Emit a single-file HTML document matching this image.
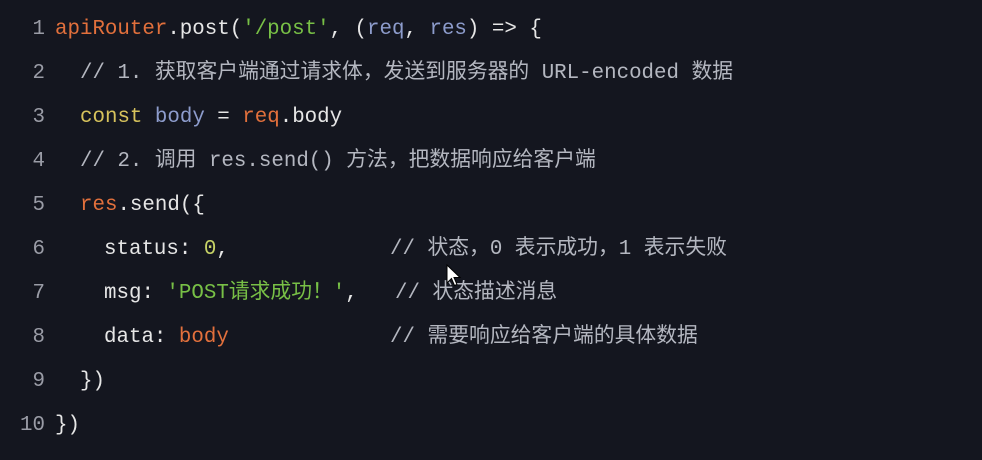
<!DOCTYPE html>
<html><head><meta charset="utf-8"><style>
body{margin:0;width:982px;height:460px;background:#14161f;overflow:hidden;position:relative;font-family:"Liberation Mono","Noto Sans CJK SC",monospace;font-size:20.8px;color:#e6e6e6}
.l{position:absolute;left:0;height:30px;line-height:30px;white-space:pre}
.n{position:absolute;width:45px;text-align:right;color:#9a9ca6}
.c{position:absolute;left:55px}
.o{color:#e2703c}.g{color:#78c046}.b{color:#8d9ccc}.y{color:#d6c25c}.k{color:#a8acb6}.z{color:#c6d266}
.cm{position:absolute;color:#b4b7c0}
</style></head><body>
<div class="l" style="top:15px"><span class="n">1</span><span class="c"><span class="o">apiRouter</span>.post(<span class="g">'/post'</span>, (<span class="b">req</span>, <span class="b">res</span>) =&gt; {</span></div>
<div class="l" style="top:59px"><span class="n">2</span><span class="c" style="left:80px;color:#b4b7c0">// 1. 获取客户端通过请求体，发送到服务器的 URL-encoded 数据</span></div>
<div class="l" style="top:103px"><span class="n">3</span><span class="c" style="left:80px"><span class="y">const</span> <span class="b">body</span> = <span class="o">req</span>.body</span></div>
<div class="l" style="top:147px"><span class="n">4</span><span class="c" style="left:80px;color:#b4b7c0">// 2. 调用 res.send() 方法，把数据响应给客户端</span></div>
<div class="l" style="top:191px"><span class="n">5</span><span class="c" style="left:80px"><span class="o">res</span>.send({</span></div>
<div class="l" style="top:235px"><span class="n">6</span><span class="c" style="left:104px">status: <span class="z">0</span>,</span><span class="cm" style="left:390px">// 状态，0 表示成功，1 表示失败</span></div>
<div class="l" style="top:279px"><span class="n">7</span><span class="c" style="left:104px">msg: <span class="g">'POST请求成功！'</span>,</span><span class="cm" style="left:395px">// 状态描述消息</span></div>
<div class="l" style="top:323px"><span class="n">8</span><span class="c" style="left:104px">data: <span class="o">body</span></span><span class="cm" style="left:390px">// 需要响应给客户端的具体数据</span></div>
<div class="l" style="top:367px"><span class="n">9</span><span class="c" style="left:80px">})</span></div>
<div class="l" style="top:411px"><span class="n">10</span><span class="c">})</span></div>
<svg style="position:absolute;left:446px;top:264px" width="16" height="24" viewBox="0 0 16 24"><path d="M1 1 L1 19 L5.5 14.5 L8.5 21.5 L11 20.5 L8 13.5 L14 13.5 Z" fill="#fff" stroke="#000" stroke-width="1"/></svg>
</body></html>
